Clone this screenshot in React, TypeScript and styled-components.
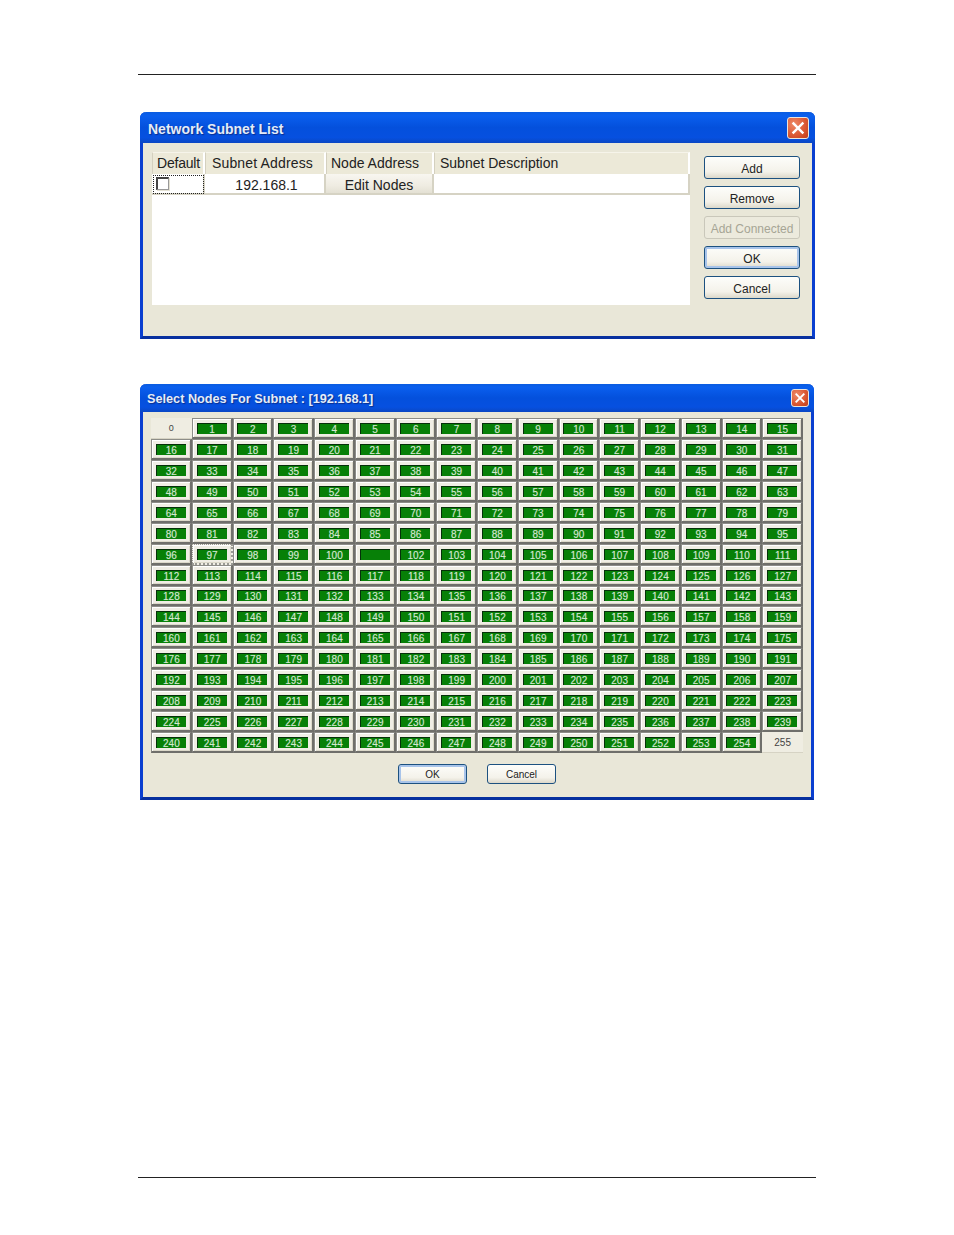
import styled, { createGlobalStyle } from 'styled-components';

const GlobalStyle = createGlobalStyle`
  html, body { margin: 0; padding: 0; background: #fff; }
  body { font-family: "Liberation Sans", Arial, sans-serif; color: #222; }
`;

const App = () => {
  const nodes = Array.from({ length: 256 }, (_, i) => i);

  return (
    <Page>
      <GlobalStyle />
      <Rule />
      <SubnetWindow>
        <TitleBar $large>
          <TitleText $large>Network Subnet List</TitleText>
          <CloseButton $large><CloseIcon /></CloseButton>
        </TitleBar>
        <SubnetBody>
          <List>
            <HeaderCell>Default</HeaderCell>
            <HeaderCell>Subnet Address</HeaderCell>
            <HeaderCell>Node Address</HeaderCell>
            <HeaderCell>Subnet Description</HeaderCell>
            <CheckCell><CheckBox /></CheckCell>
            <ValueCell>192.168.1</ValueCell>
            <EditCell>Edit Nodes</EditCell>
            <ValueCell />
          </List>
          <ButtonColumn>
            <SideButton>Add</SideButton>
            <SideButton>Remove</SideButton>
            <SideButton disabled>Add Connected</SideButton>
            <SideButton $default>OK</SideButton>
            <SideButton>Cancel</SideButton>
          </ButtonColumn>
        </SubnetBody>
      </SubnetWindow>

      <NodesWindow>
        <TitleBar>
          <TitleText>Select Nodes For Subnet : [192.168.1]</TitleText>
          <CloseButton><CloseIcon /></CloseButton>
        </TitleBar>
        <NodesBody>
          <NodeGrid>
            {nodes.map((n) =>
              n === 0 || n === 255 ? (
                <FlatCell key={n} $wide={n === 255}>{n}</FlatCell>
              ) : (
                <NodeCell key={n} $focused={n === 97}>
                  <NodeLabel>{n === 101 ? '' : n}</NodeLabel>
                </NodeCell>
              ),
            )}
          </NodeGrid>
          <DialogActions>
            <DialogButton $default>OK</DialogButton>
            <DialogButton>Cancel</DialogButton>
          </DialogActions>
        </NodesBody>
      </NodesWindow>
      <FooterRule />
    </Page>
  );
};

const CloseIcon = () => (
  <svg viewBox="0 0 22 22" width="100%" height="100%" aria-hidden="true">
    <path d="M6 6 L16 16 M16 6 L6 16" stroke="#fff" strokeWidth="2.6" strokeLinecap="square" fill="none" />
  </svg>
);

export default App;

const Page = styled.div`
  width: 954px;
  height: 1235px;
  box-sizing: border-box;
  padding: 74px 138px 57px;
  display: flex;
  flex-direction: column;
  overflow: hidden;
`;

const Rule = styled.div`
  height: 1px;
  background: #222;
  flex-shrink: 0;
`;

const FooterRule = styled(Rule)`
  margin-top: auto;
`;

const WindowFrame = styled.div`
  margin-left: 2px;
  box-sizing: border-box;
  border: 3px solid #0a3fd0;
  border-top: none;
  border-bottom-color: #07309f;
  border-radius: 6px 6px 0 0;
  background: #e9e7d8;
  display: flex;
  flex-direction: column;
`;

const SubnetWindow = styled(WindowFrame)`
  width: 675px;
  height: 227px;
  margin-top: 37px;
`;

const NodesWindow = styled(WindowFrame)`
  width: 674px;
  height: 416px;
  margin-top: 45px;
`;

const TitleBar = styled.div<{ $large?: boolean }>`
  height: ${(p) => (p.$large ? 31 : 28)}px;
  margin: 0 -3px;
  padding: ${(p) => (p.$large ? '0 6px 0 8px' : '0 5px 0 7px')};
  box-sizing: border-box;
  flex-shrink: 0;
  border-radius: 6px 6px 0 0;
  display: flex;
  align-items: center;
  justify-content: space-between;
  background: linear-gradient(180deg, #0a5ce0 0%, #0a5fee 12%, #0450dc 50%, #0650e0 82%, #0a47c4 100%);
`;

const TitleText = styled.span<{ $large?: boolean }>`
  color: #e4ecf8;
  font-size: ${(p) => (p.$large ? 14 : 12.7)}px;
  font-weight: 700;
  padding-top: 2px;
  text-shadow: 1px 1px 1px #0a2f90;
  white-space: nowrap;
`;

const CloseButton = styled.div<{ $large?: boolean }>`
  width: ${(p) => (p.$large ? 22 : 18)}px;
  height: ${(p) => (p.$large ? 22 : 18)}px;
  box-sizing: border-box;
  border: 1px solid #e9e4de;
  border-radius: 3px;
  background: radial-gradient(circle at 30% 30%, #ee8a68 0%, #dc5a35 55%, #c23c18 100%);
  flex-shrink: 0;
`;

const SubnetBody = styled.div`
  flex: 1;
  padding: 9px 12px 0 9px;
  display: flex;
  gap: 14px;
  align-items: flex-start;
`;

const List = styled.div`
  width: 538px;
  height: 153px;
  background: #fff;
  display: grid;
  grid-template-columns: 53px 121px 108px 256px;
  grid-template-rows: 22px 21px;
  align-content: start;
  font-size: 14px;
`;

const HeaderCell = styled.div`
  box-sizing: border-box;
  padding: 0 0 2px 5px;
  display: flex;
  align-items: center;
  background: #ece9d8;
  border-top: 1px solid #f6f4ea;
  border-right: 2px solid #fff;
  border-left: 1px solid #d4d0bf;
  white-space: nowrap;

  &:nth-child(1) { padding-left: 4px; letter-spacing: -0.2px; }
  &:nth-child(2) { padding-left: 6px; letter-spacing: 0.15px; }
  &:nth-child(3) { padding-left: 4px; }
`;

const ValueCell = styled.div`
  box-sizing: border-box;
  display: flex;
  align-items: center;
  justify-content: center;
  border-right: 2px solid #d6d3c4;
  border-bottom: 2px solid #d6d3c4;
  padding: 2px 0 0 4px;
`;

const CheckCell = styled(ValueCell)`
  justify-content: flex-start;
  padding: 0 0 0 4px;
  outline: 1px dotted #222;
  outline-offset: -2px;
`;

const CheckBox = styled.span`
  width: 13px;
  height: 13px;
  box-sizing: border-box;
  border: 1px solid #999;
  border-top: 2px solid #444;
  border-left: 2px solid #444;
  background: #fff;
  box-shadow: 1px 1px 0 #e4e1d2;
`;

const EditCell = styled(ValueCell)`
  padding: 2px 0 0 0;
  background: linear-gradient(180deg, #f8f6f0 0%, #efece2 60%, #e4e1d4 100%);
`;

const ButtonColumn = styled.div`
  margin-top: 4px;
  display: flex;
  flex-direction: column;
  gap: 7px;
`;

const SideButton = styled.button<{ $default?: boolean }>`
  width: 96px;
  height: 23px;
  padding: 2px 0 0;
  font: 12px "Liberation Sans", Arial, sans-serif;
  color: #222;
  border: 1px solid #1c5180;
  border-radius: 3px;
  background: linear-gradient(180deg, #fdfdfa 0%, #f4f2ea 70%, #dcd8ca 100%);
  box-shadow: ${(p) => (p.$default ? 'inset 0 0 0 2px #a8c4ea' : 'none')};

  &:disabled {
    color: #a6a595;
    border-color: #c9c7ba;
    background: #eceadd;
  }
`;

const NodesBody = styled.div`
  flex: 1;
  padding: 6px 0 0 8px;
  display: flex;
  flex-direction: column;
`;

const NodeGrid = styled.div`
  width: 652px;
  height: 335px;
  display: grid;
  grid-template-columns: repeat(16, 1fr);
  grid-template-rows: repeat(16, 1fr);
`;

const NodeCell = styled.div<{ $focused?: boolean }>`
  box-sizing: border-box;
  min-width: 0;
  padding-top: 1px;
  display: flex;
  align-items: center;
  justify-content: center;
  border-style: ${(p) => (p.$focused ? 'dotted' : 'solid')};
  border-color: ${(p) => (p.$focused ? '#9a9a94' : '#8d8d88 #6f6f6b #6f6f6b #8d8d88')};
  border-width: 1px 2px 2px 1px;
  background: #f0eee5;
  box-shadow: inset 1px 1px 0 #fff, inset -1px -1px 0 #dcd9ca;
`;

const NodeLabel = styled.span`
  width: 30px;
  height: 11px;
  box-sizing: border-box;
  border-top: 1px solid #06300a;
  border-left: 1px solid #06300a;
  background: #078007;
  color: #d4e8d1;
  font-size: 10px;
  line-height: 11px;
  text-align: center;
  text-shadow: 0 0 1px rgba(255, 255, 255, 0.35);
  overflow: hidden;
`;

const FlatCell = styled.div<{ $wide?: boolean }>`
  display: flex;
  align-items: center;
  justify-content: center;
  min-width: 0;
  background: #efede2;
  border-bottom: 1px solid #d6d3c4;
  color: #444;
  font-size: ${(p) => (p.$wide ? 10 : 9)}px;
`;

const DialogActions = styled.div`
  margin-top: 11px;
  padding-right: 8px;
  display: flex;
  justify-content: center;
  gap: 20px;
`;

const DialogButton = styled.button<{ $default?: boolean }>`
  width: 69px;
  height: 20px;
  padding: 0;
  font: 10px "Liberation Sans", Arial, sans-serif;
  color: #222;
  border: 1px solid #1c5180;
  border-radius: 3px;
  background: linear-gradient(180deg, #fdfdfa 0%, #f4f2ea 70%, #dcd8ca 100%);
  box-shadow: ${(p) => (p.$default ? 'inset 0 0 0 2px #a8c4ea' : 'none')};
`;
